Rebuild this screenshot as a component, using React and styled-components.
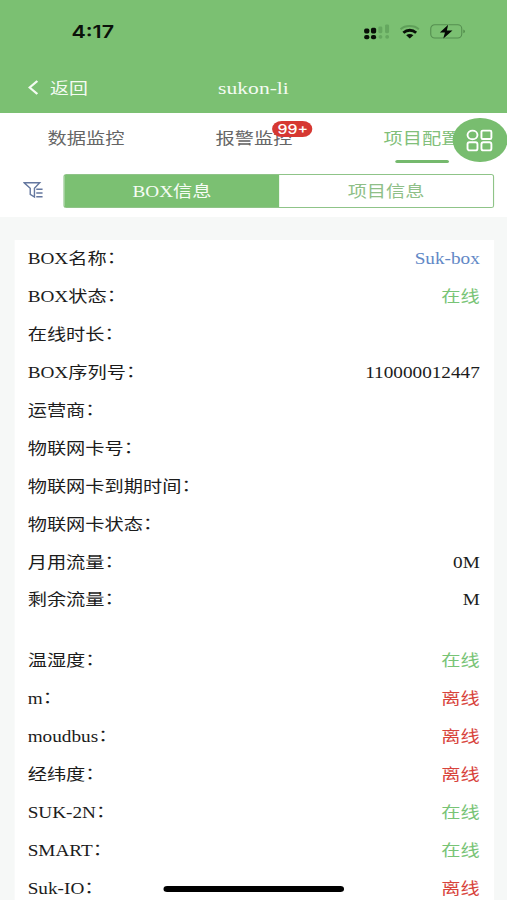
import React from "react";
import styled, { createGlobalStyle } from "styled-components";

const GREEN = "#7bc072";
const sans = `"Noto Sans CJK SC", sans-serif`;
const serif = `"Liberation Serif", "Noto Sans CJK SC", serif`;
// The whole screen is laid out narrower and widened horizontally.
const STRETCH = 1.22;

const GlobalStyle = createGlobalStyle`
  * { box-sizing: border-box; }
  body { margin: 0; overflow: hidden; background: #f6f8f7; }
`;

const Screen = styled.div`
  position: relative;
  width: ${507 / STRETCH}px;
  height: 900px;
  overflow: hidden;
  transform: scaleX(${STRETCH});
  transform-origin: 0 0;
  background: #f6f8f7;
  font-family: ${serif};
  font-size: 15.75px;
  color: #1c1c1c;
`;

const Header = styled.header`
  height: 113px;
  background: ${GREEN};
`;

const StatusBar = styled.div`
  display: flex;
  justify-content: space-between;
  height: 63px;
  padding: 20px 33.6px 0 58.6px;
`;

const Clock = styled.span`
  font: 600 17.6px/23px Inter, sans-serif;
  color: #0b120a;
`;

const StatusIcons = styled.svg`
  width: ${103 / STRETCH}px;
  height: 18px;
  margin-top: 3px;
`;

const NavBar = styled.div`
  display: grid;
  grid-template-columns: 1fr auto 1fr;
  align-items: center;
  height: 50px;
  padding: 0 23px;
  color: #f4fbf2;
`;

const Back = styled.button`
  display: flex;
  align-items: center;
  gap: 9.5px;
  padding: 0 0 2px;
  border: 0;
  background: none;
  color: inherit;
  font: 15.5px/24px ${sans};
`;

const Chevron = styled.svg`
  width: 8.5px;
  height: 15px;
`;

const Title = styled.h1`
  margin: 0;
  font: 400 17.7px/24px ${serif};
`;

const Toolbar = styled.section`
  height: 104px;
  background: #fff;
`;

const Tabs = styled.nav`
  display: flex;
  height: 50px;
  padding-left: 1.6px;
`;

const Tab = styled.button`
  position: relative;
  flex: 0 0 137.7px;
  height: 50px;
  padding: 0;
  border: 0;
  background: none;
  font: 15.75px/48px ${sans};
  color: ${(p) => (p.$active ? "#82bf7a" : "#666")};
  white-space: nowrap;

  &::after {
    content: "";
    position: absolute;
    left: 50%;
    bottom: 0;
    width: 44px;
    height: 3px;
    margin-left: -22px;
    border-radius: 2px;
    background: ${(p) => (p.$active ? "#75b96d" : "transparent")};
  }
`;

const Badge = styled.span`
  position: absolute;
  top: 7.5px;
  left: 84.2px;
  width: 33px;
  height: 16.5px;
  border-radius: 8.5px;
  background: #d63832;
  color: #fff;
  font: 500 13px/16px Inter, sans-serif;
  text-align: center;
`;

const FilterRow = styled.div`
  display: flex;
  align-items: center;
  height: 54px;
  padding: 0 10.4px 0 18.8px;
`;

const FilterIcon = styled.svg`
  width: 16.5px;
  height: 18px;
  margin-right: 17px;
`;

const Segments = styled.div`
  display: flex;
  flex: 1;
  height: 34px;
  margin-top: 2px;
  border: 1px solid #8fc488;
  border-radius: 2.5px;
  background: linear-gradient(to right, ${GREEN} 50%, #fff 50%);
  overflow: hidden;
`;

const Segment = styled.button`
  flex: 1;
  padding: 0;
  border: 0;
  background: ${(p) => (p.$active ? GREEN : "#fff")};
  color: ${(p) => (p.$active ? "#f6fcf4" : "#8fbf88")};
  font: 15.75px/31px ${serif};
`;

const Card = styled.main`
  margin: 23px 10.5px 0 11.5px;
  padding: 0 11.8px 0 11.2px;
  background: #fff;
`;

const Group = styled.section`
  padding-bottom: 23px;
`;

const Row = styled.div`
  display: flex;
  justify-content: space-between;
  height: 37.95px;
  line-height: 38px;
`;

const Colon = styled.span`
  display: inline-block;
  line-height: 1;
  vertical-align: 1px;
`;

const tones = { link: "#6288c6", online: "#78c476", offline: "#d8443c" };

const Value = styled.span`
  color: ${(p) => tones[p.$tone] || "inherit"};
`;

const FloatingButton = styled.button`
  position: absolute;
  top: 118px;
  right: 0;
  display: grid;
  place-items: center;
  width: 44.4px;
  height: 44px;
  padding: 0;
  border: 0;
  border-radius: 50%;
  background: #78bd6f;
`;

const GridIcon = styled.svg`
  width: 22px;
  height: 23px;
`;

const HomeIndicator = styled.div`
  position: absolute;
  left: 134.4px;
  top: 886px;
  width: 148px;
  height: 6px;
  border-radius: 3px;
  background: #000;
`;

const boxInfo = [
  ["BOX名称", "Suk-box", "link"],
  ["BOX状态", "在线", "online"],
  ["在线时长", ""],
  ["BOX序列号", "110000012447"],
  ["运营商", ""],
  ["物联网卡号", ""],
  ["物联网卡到期时间", ""],
  ["物联网卡状态", ""],
  ["月用流量", "0M"],
  ["剩余流量", "M"],
];

const devices = [
  ["温湿度", true],
  ["m", false],
  ["moudbus", false],
  ["经纬度", false],
  ["SUK-2N", true],
  ["SMART", true],
  ["Suk-IO", false],
].map(([name, on]) => [name, on ? "在线" : "离线", on ? "online" : "offline"]);

function InfoGroup({ rows }) {
  return (
    <Group>
      {rows.map(([label, value, tone]) => (
        <Row key={label}>
          <span>
            {label}
            <Colon>：</Colon>
          </span>
          <Value $tone={tone}>{value}</Value>
        </Row>
      ))}
    </Group>
  );
}

export default function App() {
  return (
    <>
      <GlobalStyle />
      <Screen>
        <Header>
          <StatusBar>
            <Clock>4:17</Clock>
            <StatusIcons viewBox="0 0 103 18" preserveAspectRatio="none">
              <g fill="#091008">
                <rect x="0.6" y="5.6" width="5.2" height="4.8" rx="1.6" />
                <rect x="7.4" y="4.8" width="5.2" height="5.6" rx="1.6" />
                <rect x="0.6" y="12" width="5.2" height="4.2" rx="1.9" />
                <rect x="7.4" y="12" width="5.2" height="4.2" rx="1.9" />
              </g>
              <g fill="#65a75f">
                <rect x="14.8" y="3.4" width="4" height="6.8" rx="1.4" />
                <rect x="21.5" y="1.4" width="4" height="8.8" rx="1.4" />
                <rect x="15" y="12" width="3.8" height="3.8" rx="1.8" />
                <rect x="21.7" y="12" width="3.8" height="3.8" rx="1.8" />
              </g>
              <path d="M37 6.3C41.6 2 50.6 2 55.3 6.3" fill="none" stroke="#5f9f59" strokeWidth="2" />
              <path d="M39.8 9.8C43.6 6.4 48.8 6.4 52.6 9.8" fill="none" stroke="#091008" strokeWidth="2.8" />
              <path d="M42.6 12.2C44.6 10.5 47.8 10.5 49.8 12.2L46.2 15.6Z" fill="#091008" />
              <rect x="67.2" y="1.8" width="31" height="13.2" rx="4" fill="none" stroke="#558e50" strokeWidth="1.1" />
              <path d="M99.8 6.5C101.9 7.3 101.9 9.5 99.8 10.3Z" fill="#4f8949" />
              <path d="M84.6 1.8L76.3 9.5H81.4L79.6 15.8L88.9 7.5H83.3Z" fill="#050905" stroke={GREEN} strokeWidth="1" paintOrder="stroke" />
            </StatusIcons>
          </StatusBar>
          <NavBar>
            <Back>
              <Chevron viewBox="0 0 8.5 15" fill="none" stroke="currentColor" strokeWidth="1.9">
                <path d="M7.6 1L1.2 7.5L7.6 14" />
              </Chevron>
              返回
            </Back>
            <Title>sukon-li</Title>
          </NavBar>
        </Header>

        <Toolbar>
          <Tabs>
            <Tab>数据监控</Tab>
            <Tab>
              报警监控
              <Badge>99+</Badge>
            </Tab>
            <Tab $active>项目配置</Tab>
          </Tabs>
          <FilterRow>
            <FilterIcon viewBox="0 0 20 18" preserveAspectRatio="none" fill="none" stroke="#64779f" strokeWidth="1.4">
              <path d="M1 1.8H16.4L11.2 7.2V16L7 13.4V7.2Z" />
              <path d="M13 8.2H19.5M13 12H19.5M13 15.8H19.5" />
            </FilterIcon>
            <Segments>
              <Segment $active>BOX信息</Segment>
              <Segment>项目信息</Segment>
            </Segments>
          </FilterRow>
        </Toolbar>

        <Card>
          <InfoGroup rows={boxInfo} />
          <InfoGroup rows={devices} />
        </Card>

        <FloatingButton aria-label="菜单">
          <GridIcon viewBox="0 0 27 23" preserveAspectRatio="none" fill="none" stroke="#fff" strokeWidth="1.9">
            <ellipse cx="6.5" cy="5.9" rx="5" ry="4.3" />
            <rect x="15.5" y="1.6" width="10" height="8.4" rx="1.3" />
            <rect x="1.5" y="13.2" width="10" height="8.2" rx="2" />
            <rect x="15.5" y="13.2" width="10" height="8.2" rx="2" />
          </GridIcon>
        </FloatingButton>
        <HomeIndicator />
      </Screen>
    </>
  );
}
